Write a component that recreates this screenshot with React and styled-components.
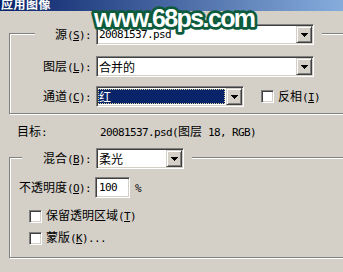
import React from "react";
import styled, { createGlobalStyle } from "styled-components";

const Global = createGlobalStyle`
  html, body { margin: 0; padding: 0; background: #d4d0c8; overflow: hidden; }
  body {
    width: 343px; height: 272px;
    font-family: "Noto Sans CJK SC", sans-serif;
    font-size: 12px; line-height: 16px; color: #000;
  }
`;

const Window = styled.div`
  position: relative;
  width: 343px;
  height: 272px;
  overflow: hidden;
  background: #d4d0c8;
  display: flex;
  flex-direction: column;
`;

const TitleBar = styled.div`
  flex: none;
  height: 11px;
  overflow: hidden;
  background: linear-gradient(to right, #0a246a, #86acdc);
`;

const Title = styled.div`
  color: #fff;
  font-weight: 700;
  font-size: 12px;
  line-height: 12px;
  letter-spacing: 0.5px;
  margin-top: -2px;
  padding-left: 1px;
`;

const Watermark = styled.svg`
  position: absolute;
  left: 88px;
  top: 0;
  width: 172px;
  height: 34px;
  overflow: visible;
`;

const Body = styled.div`
  display: flex;
  flex-direction: column;
  padding-left: 9px;
`;

const Group = styled.div`
  flex: none;
  width: 360px;
  box-sizing: border-box;
  border: 1px solid #808080;
  box-shadow: inset 1px 1px 0 #fff, 1px 1px 0 #fff;
  margin-top: ${(p) => p.$top}px;
  padding-bottom: ${(p) => p.$pb}px;
  display: flex;
  flex-direction: column;
`;

const Legend = styled.div`
  align-self: flex-start;
  display: flex;
  align-items: center;
  background: #d4d0c8;
  margin: -10px 0 0 ${(p) => p.$ml}px;
  padding-right: 8px;
`;

const Row = styled.div`
  display: flex;
  align-items: center;
  margin-top: ${(p) => p.$mt || 0}px;
  margin-left: ${(p) => p.$ml || 0}px;
  height: ${(p) => p.$h || 16}px;
`;

const Label = styled.div`
  flex: none;
  width: ${(p) => p.$w}px;
  margin-right: ${(p) => p.$gap || 5}px;
  text-align: ${(p) => (p.$left ? "left" : "right")};
  white-space: nowrap;
`;

const Lat = styled.span`
  font-family: "DejaVu Sans Mono", monospace;
  font-size: 11px;
  letter-spacing: -0.62px;
`;

const U = styled.span`
  text-decoration: underline;
  text-underline-offset: 1px;
`;

const Sunken = styled.div`
  box-sizing: border-box;
  border: 1px solid;
  border-color: #808080 #fff #fff #808080;
  box-shadow: inset 1px 1px 0 #404040, inset -1px -1px 0 #d4d0c8;
  background: #fff;
`;

const Combo = styled(Sunken)`
  flex: none;
  width: ${(p) => p.$w}px;
  height: 21px;
  padding: 1px;
  display: flex;
`;

const ComboText = styled.div`
  flex: 1;
  min-width: 0;
  display: flex;
  align-items: center;
  white-space: nowrap;
  padding-left: 1px;
  margin: 1px 1px 1px 0;
  ${(p) =>
    p.$selected &&
    `background: #0a246a; color: #fff; outline: 1px dotted #d8d4a0; outline-offset: -1px;`}
`;

const DropButton = styled.div`
  flex: none;
  width: 16px;
  height: 17px;
  box-sizing: border-box;
  background: #d4d0c8;
  border: 1px solid;
  border-color: #d4d0c8 #404040 #404040 #d4d0c8;
  box-shadow: inset 1px 1px 0 #fff, inset -1px -1px 0 #808080;
  display: flex;
  align-items: center;
  justify-content: center;
`;

const TextBox = styled(Sunken)`
  flex: none;
  width: 35px;
  height: 21px;
  padding: 0 3px;
  display: flex;
  align-items: center;
`;

const Check = styled(Sunken)`
  flex: none;
  width: 13px;
  height: 13px;
  margin-right: 4px;
`;

const Unit = styled.span`
  margin-left: 5px;
`;

const Arrow = () => (
  <svg width="7" height="4" viewBox="0 0 7 4" shapeRendering="crispEdges">
    <path d="M0 0h7v1H0zM1 1h5v1H1zM2 2h3v1H2zM3 3h1v1H3z" fill="#000" />
  </svg>
);

const Select = ({ w, selected, children }) => (
  <Combo $w={w}>
    <ComboText $selected={selected}>{children}</ComboText>
    <DropButton>
      <Arrow />
    </DropButton>
  </Combo>
);

const CheckRow = ({ mt, ml, children }) => (
  <Row $mt={mt} $ml={ml}>
    <Check />
    <span>{children}</span>
  </Row>
);

export default function App() {
  return (
    <Window>
      <Global />
      <TitleBar>
        <Title>应用图像</Title>
      </TitleBar>
      <Body>
        <Group $top={22} $pb={6}>
          <Legend $ml={25}>
            <Label $w={56}>
              源<Lat>(<U>S</U>):</Lat>
            </Label>
            <Select w={218}>
              <Lat>20081537.psd</Lat>
            </Select>
          </Legend>
          <Row $mt={11} $ml={25} $h={21}>
            <Label $w={56}>
              图层<Lat>(<U>L</U>):</Lat>
            </Label>
            <Select w={218}>合并的</Select>
          </Row>
          <Row $mt={9} $ml={25} $h={21}>
            <Label $w={56}>
              通道<Lat>(<U>C</U>):</Lat>
            </Label>
            <Select w={148} selected>
              红
            </Select>
            <Row $ml={17}>
              <Check />
              <span>
                反相<Lat>(<U>I</U>)</Lat>
              </span>
            </Row>
          </Row>
        </Group>
        <Row $mt={10} $ml={8}>
          <Label $w={78} $left $gap={0}>
            目标<Lat>:</Lat>
          </Label>
          <span>
            <Lat>20081537.psd(</Lat>图层<Lat> 18, RGB)</Lat>
          </span>
        </Row>
        <Group $top={17} $pb={11}>
          <Legend $ml={12}>
            <Label $w={69}>
              混合<Lat>(<U>B</U>):</Lat>
            </Label>
            <Select w={88}>柔光</Select>
          </Legend>
          <Row $mt={8} $h={21}>
            <Label $w={81} $gap={4}>
              不透明度<Lat>(<U>O</U>):</Lat>
            </Label>
            <TextBox>
              <Lat>100</Lat>
            </TextBox>
            <Unit>
              <Lat>%</Lat>
            </Unit>
          </Row>
          <CheckRow mt={10} ml={19}>
            保留透明区域<Lat>(<U>T</U>)</Lat>
          </CheckRow>
          <CheckRow mt={6} ml={19}>
            蒙版<Lat>(<U>K</U>)...</Lat>
          </CheckRow>
        </Group>
      </Body>
      <Watermark viewBox="0 0 172 34">
        <text
          x="6"
          y="27"
          fontFamily="Liberation Sans, Arial, sans-serif"
          fontWeight="700"
          fontSize="25"
          letterSpacing="-1.6"
          fill="#fff"
          stroke="#0d5b3d"
          strokeWidth="5.5"
          strokeLinejoin="round"
          paintOrder="stroke"
        >
          www.68ps.com
        </text>
      </Watermark>
    </Window>
  );
}
